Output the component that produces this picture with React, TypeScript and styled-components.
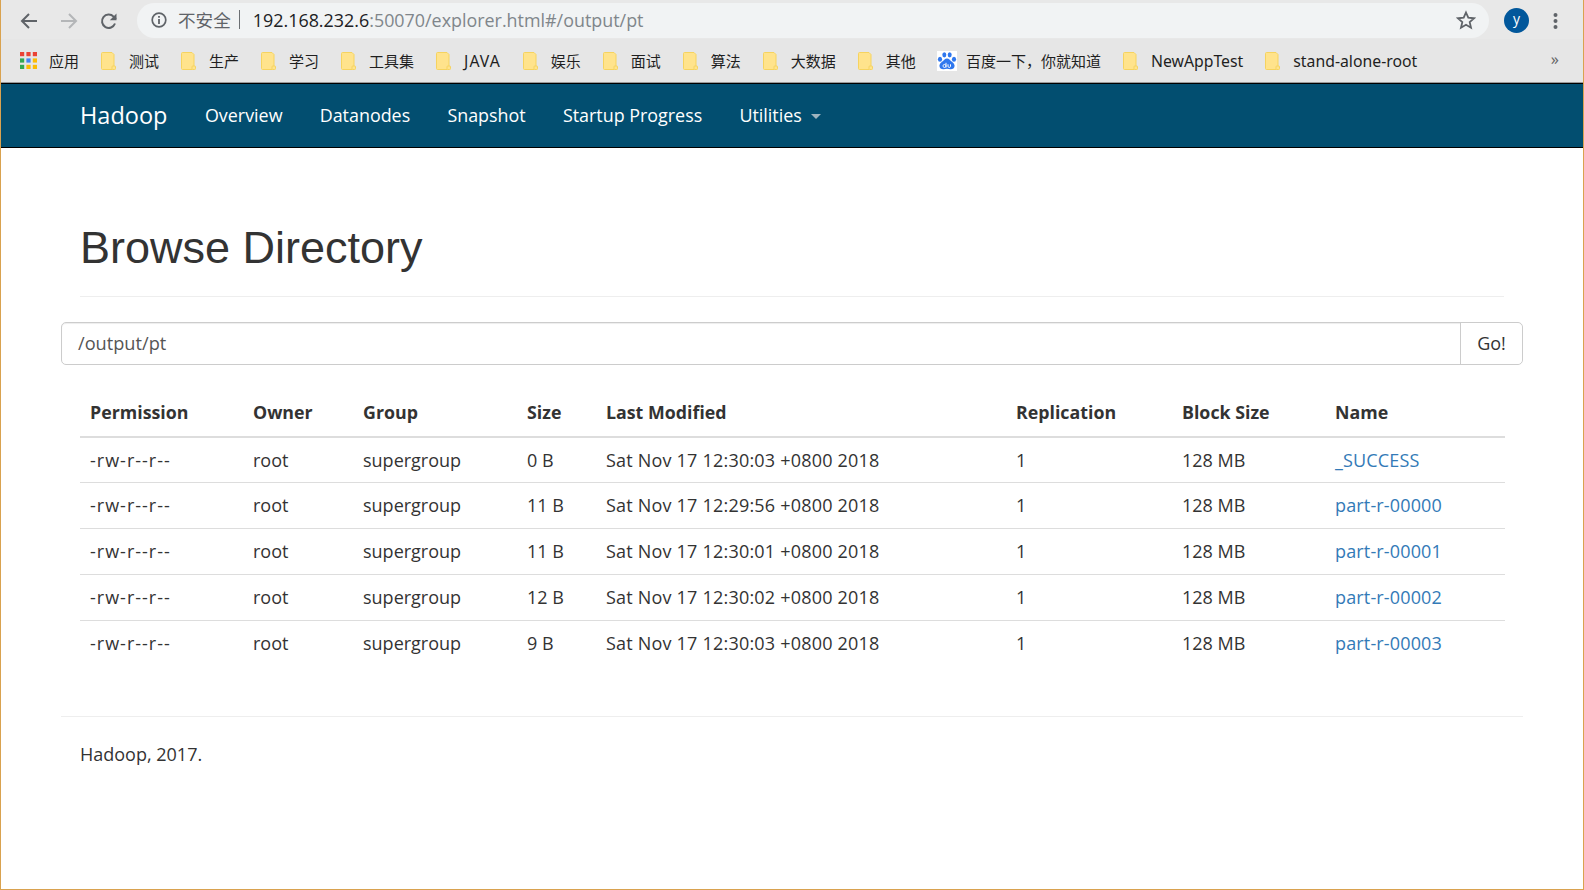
import React from 'react';
import styled, { createGlobalStyle } from 'styled-components';

const Global = createGlobalStyle`
  html, body { margin: 0; padding: 0; background: #fff; }
  * { box-sizing: border-box; }
`;

const cjk = `"Noto Sans", "Noto Sans CJK SC", sans-serif`;
const ui = `"Open Sans", "Noto Sans CJK SC", sans-serif`;

const Frame = styled.div`
  width: 1584px;
  height: 890px;
  border: 1px solid #d9a24f;
  border-top: 0;
  background: #fff;
  overflow: hidden;
  font-family: ${ui};
`;

const Toolbar = styled.div`
  height: 39px;
  margin: 0 -1px;
  background: #e8e8e8;
  display: flex;
  align-items: flex-start;
  padding: 3px 0 0 9px;
`;

const NavIcon = styled.span`
  width: 40px;
  height: 35px;
  display: flex;
  align-items: center;
  justify-content: center;
  flex: none;
`;

const Omnibox = styled.div`
  margin-left: 8px;
  width: 1352px;
  height: 35px;
  border-radius: 18px;
  background: #f1f3f4;
  display: flex;
  align-items: center;
  padding: 0 13px 2px 14px;
  font-size: 17.9px;
  color: #80868b;
  white-space: nowrap;
`;

const Insecure = styled.span`
  margin-left: 11px;
  color: #5f6368;
  font-size: 17.6px;
  font-family: "Noto Sans CJK SC", sans-serif;
`;

const Sep = styled.span`
  width: 1px;
  height: 19px;
  background: #6b6f73;
  margin: 0 13px 0 8px;
`;

const Host = styled.span`
  color: #202124;
`;

const Spacer = styled.span`
  flex: 1;
`;

const Avatar = styled.span`
  width: 25px;
  height: 25px;
  margin: 5px 0 0 15px;
  border-radius: 50%;
  background: #01579b;
  color: #fff;
  font-size: 14px;
  line-height: 22px;
  text-align: center;
  flex: none;
`;

const Dots = styled.span`
  width: 30px;
  height: 35px;
  margin-left: 24px;
  display: flex;
  align-items: center;
  justify-content: flex-start;
  flex: none;
`;

const Bookmarks = styled.div`
  height: 44px;
  margin: 0 -1px;
  padding: 0 0 0 20px;
  background: #e6e6e6;
  border-bottom: 1px solid #9a9a9a;
  display: flex;
  align-items: center;
  font-size: 15px;
  color: #1f1f1f;
  font-family: ${cjk};
  white-space: nowrap;
`;

const Mark = styled.span<{ $gap?: number; $latin?: boolean; $track?: number; $after?: number }>`
  display: flex;
  align-items: center;
  gap: ${(p) => p.$gap ?? 13}px;
  margin-right: ${(p) => p.$after ?? 22}px;
  line-height: 20px;
  font-size: ${(p) => (p.$latin ? 15.8 : 15)}px;
  letter-spacing: ${(p) => p.$track ?? 0}px;
`;

const More = styled.span`
  margin-left: auto;
  margin-right: 25px;
  color: #666;
  font-size: 16px;
  margin-top: -3px;
`;

const Navbar = styled.nav`
  height: 65px;
  margin: 0 -1px;
  background: #024e70;
  border-top: 1px solid #000;
  border-bottom: 1px solid #000;
  display: flex;
  align-items: center;
  padding: 0 0 1px 80px;
  color: #fff;
`;

const Brand = styled.a`
  font-size: 23.5px;
  margin-right: 37.5px;
`;

const NavLink = styled.a`
  font-size: 17.9px;
  margin-right: 37.2px;
  display: flex;
  align-items: center;
`;

const Caret = styled.span`
  width: 0;
  height: 0;
  margin-left: 9px;
  margin-top: 3px;
  border-top: 5px solid #9fb4bf;
  border-left: 5px solid transparent;
  border-right: 5px solid transparent;
`;

const Container = styled.main`
  padding: 0 60px;
`;

const PageHeader = styled.header`
  margin: 0 19px;
  height: 149px;
  padding-top: 70px;
  border-bottom: 1px solid #eee;
`;

const Title = styled.h1`
  margin: 0;
  font-family: "Liberation Sans", Arial, sans-serif;
  font-size: 45px;
  line-height: 60px;
  font-weight: 400;
  color: #333;
`;

const InputGroup = styled.form`
  margin-top: 25px;
  height: 43px;
  display: flex;
  border: 1px solid #ccc;
  border-radius: 5px;
  box-shadow: inset 0 1px 1px rgba(0, 0, 0, 0.075);
`;

const PathField = styled.div`
  flex: 1;
  padding: 0 16px;
  font-size: 18.2px;
  line-height: 41px;
  color: #555;
`;

const GoButton = styled.button`
  width: 62px;
  background: #fff;
  border: 0;
  border-left: 1px solid #ccc;
  border-radius: 0 5px 5px 0;
  padding: 0 0 2px;
  font: inherit;
  font-size: 18px;
  color: #333;
`;

const Table = styled.table`
  margin: 25px 19px 0;
  width: 1425px;
  border-collapse: collapse;
  table-layout: fixed;
  font-size: 18px;
  color: #333;

  tbody tr:first-child td {
    border-top: 0;
  }
`;

const HeadCell = styled.th`
  height: 47px;
  padding: 0 10px 2px;
  text-align: left;
  font-size: 17.8px;
  font-weight: 700;
  border-bottom: 2.5px solid #ddd;
  white-space: nowrap;
`;

const Cell = styled.td<{ $track?: number }>`
  height: 45.75px;
  padding: 0 10px 1px;
  border-top: 1px solid #ddd;
  white-space: nowrap;
  letter-spacing: ${(p) => p.$track ?? 0}px;
`;

const FileLink = styled.a`
  color: #337ab7;
`;

const FooterRule = styled.hr`
  margin: 50px 0 0;
  border: 0;
  border-top: 1px solid #eee;
`;

const FooterText = styled.p`
  margin: 25px 19px 0;
  font-size: 18px;
  line-height: 25px;
  color: #333;
`;

const Folder = () => (
  <svg width="15" height="18" viewBox="0 0 15 18" style={{ flex: 'none' }}>
    <path d="M1.500.5h9.500l2 2v13l-2 2h-9.500a1 1 0 0 1-1-1v-15a1 1 0 0 1 1-1z" fill="#ffe38c" stroke="#f6d35f" />
    <rect x="11" y="14" width="3.500" height="3.500" rx=".8" fill="#ffe38c" stroke="#f6d35f" />
  </svg>
);

const Apps = () => {
  const colors = ['#ea4335', '#ea4335', '#ea4335', '#34a853', '#4285f4', '#fbbc05', '#34a853', '#fbbc05', '#fbbc05'];
  return (
    <svg width="17" height="17" viewBox="0 0 17 17" style={{ flex: 'none' }}>
      {colors.map((c, i) => (
        <rect key={i} x={(i % 3) * 6.4} y={Math.floor(i / 3) * 6.4} width="4.200" height="4.200" fill={c} />
      ))}
    </svg>
  );
};

const Baidu = () => (
  <svg width="20" height="20" viewBox="0 0 20 20" style={{ flex: 'none' }}>
    <rect width="20" height="20" fill="#fff" />
    <g fill="#2f77ee">
      <ellipse cx="7.300" cy="3.800" rx="2" ry="2.600" />
      <ellipse cx="12.700" cy="3.800" rx="2" ry="2.600" />
      <ellipse cx="3" cy="8.200" rx="2.100" ry="2.500" />
      <ellipse cx="17" cy="8.200" rx="2.100" ry="2.500" />
      <path d="M10 7.500c2.200 0 2.800 1.600 4.600 3 1.800 1.400 3 2.700 3 4.300 0 2.500-2.200 3.700-4.200 3.500-1.300-.1-2.200-.5-3.400-.5s-2.100.4-3.400.5c-2 .2-4.200-1-4.200-3.500 0-1.600 1.200-2.900 3-4.300 1.800-1.400 2.400-3 4.600-3z" />
    </g>
    <path d="M9 11.800v4.700M9 14.900a1.500 1.500 0 1 0 0 .1M11 13.300v2c0 1.500 2.500 1.500 2.500 0v-2" fill="none" stroke="#fff" strokeWidth="1" />
  </svg>
);

const iconColor = '#5f6368';

const BackIcon = ({ color }: { color: string }) => (
  <svg width="20" height="20" viewBox="0 0 20 20" fill="none" stroke={color} strokeWidth="2">
    <path d="M18 10H3M10 3l-7 7 7 7" />
  </svg>
);

const ForwardIcon = ({ color }: { color: string }) => (
  <svg width="20" height="20" viewBox="0 0 20 20" fill="none" stroke={color} strokeWidth="2">
    <path d="M2 10h15M10 3l7 7-7 7" />
  </svg>
);

const ReloadIcon = () => (
  <svg width="20" height="20" viewBox="0 0 20 20" fill="none">
    <path d="M16 12.500a6.700 6.700 0 1 1-1.400-6.900L17 8" stroke={iconColor} strokeWidth="2" />
    <path d="M17.500 2.500v6.700h-6.700z" fill={iconColor} />
  </svg>
);

const InfoIcon = () => (
  <svg width="16" height="16" viewBox="0 0 16 16" fill="none">
    <circle cx="8" cy="8" r="6.800" stroke={iconColor} strokeWidth="1.700" />
    <path d="M7.100 7h1.800v5H7.100zM7.100 4h1.800v1.800H7.100z" fill={iconColor} />
  </svg>
);

const StarIcon = () => (
  <svg width="20" height="20" viewBox="0 0 20 20" fill="none">
    <path d="M10 2.500l2.300 5.200 5.700.6-4.300 3.800 1.300 5.600-5-2.900-5 2.900 1.300-5.600L2 8.300l5.700-.6z" stroke={iconColor} strokeWidth="1.800" strokeLinejoin="miter" />
  </svg>
);

const DotsIcon = () => (
  <svg width="5" height="18" viewBox="0 0 5 18" fill={iconColor}>
    <circle cx="2.500" cy="3" r="2" />
    <circle cx="2.500" cy="9" r="2" />
    <circle cx="2.500" cy="15" r="2" />
  </svg>
);

const marks: { label: string; latin?: boolean; track?: number; after?: number }[] = [
  { label: '测试' },
  { label: '生产' },
  { label: '学习' },
  { label: '工具集' },
  { label: 'JAVA', latin: true, track: 1 },
  { label: '娱乐' },
  { label: '面试' },
  { label: '算法' },
  { label: '大数据' },
  { label: '其他', after: 21 },
];

const rows = [
  ['0 B', '12:30:03', '_SUCCESS'],
  ['11 B', '12:29:56', 'part-r-00000'],
  ['11 B', '12:30:01', 'part-r-00001'],
  ['12 B', '12:30:02', 'part-r-00002'],
  ['9 B', '12:30:03', 'part-r-00003'],
];

const columns: [string, number][] = [
  ['Permission', 163],
  ['Owner', 110],
  ['Group', 164],
  ['Size', 79],
  ['Last Modified', 410],
  ['Replication', 166],
  ['Block Size', 153],
  ['Name', 180],
];

export default function App() {
  return (
    <Frame>
      <Global />
      <Toolbar>
        <NavIcon><BackIcon color={iconColor} /></NavIcon>
        <NavIcon><ForwardIcon color="#b4b6b8" /></NavIcon>
        <NavIcon><ReloadIcon /></NavIcon>
        <Omnibox>
          <InfoIcon />
          <Insecure>不安全</Insecure>
          <Sep />
          <Host>192.168.232.6</Host>:50070/explorer.html#/output/pt
          <Spacer />
          <StarIcon />
        </Omnibox>
        <Avatar>y</Avatar>
        <Dots><DotsIcon /></Dots>
      </Toolbar>
      <Bookmarks>
        <Mark $gap={12}><Apps />应用</Mark>
        {marks.map((m) => (
          <Mark key={m.label} $latin={m.latin} $track={m.track} $after={m.after}><Folder />{m.label}</Mark>
        ))}
        <Mark $gap={9}><Baidu />百度一下，你就知道</Mark>
        <Mark $latin><Folder />NewAppTest</Mark>
        <Mark $latin><Folder />stand-alone-root</Mark>
        <More>»</More>
      </Bookmarks>
      <Navbar>
        <Brand>Hadoop</Brand>
        <NavLink>Overview</NavLink>
        <NavLink>Datanodes</NavLink>
        <NavLink>Snapshot</NavLink>
        <NavLink>Startup Progress</NavLink>
        <NavLink>Utilities<Caret /></NavLink>
      </Navbar>
      <Container>
        <PageHeader><Title>Browse Directory</Title></PageHeader>
        <InputGroup>
          <PathField>/output/pt</PathField>
          <GoButton type="button">Go!</GoButton>
        </InputGroup>
        <Table>
          <colgroup>
            {columns.map(([name, w]) => <col key={name} width={w} />)}
          </colgroup>
          <thead>
            <tr>{columns.map(([name]) => <HeadCell key={name}>{name}</HeadCell>)}</tr>
          </thead>
          <tbody>
            {rows.map(([size, time, name]) => (
              <tr key={name}>
                <Cell $track={1}>-rw-r--r--</Cell>
                <Cell>root</Cell>
                <Cell>supergroup</Cell>
                <Cell>{size}</Cell>
                <Cell $track={0.2}>Sat Nov 17 {time} +0800 2018</Cell>
                <Cell>1</Cell>
                <Cell>128 MB</Cell>
                <Cell $track={0.15}><FileLink>{name}</FileLink></Cell>
              </tr>
            ))}
          </tbody>
        </Table>
        <FooterRule />
        <FooterText>Hadoop, 2017.</FooterText>
      </Container>
    </Frame>
  );
}
